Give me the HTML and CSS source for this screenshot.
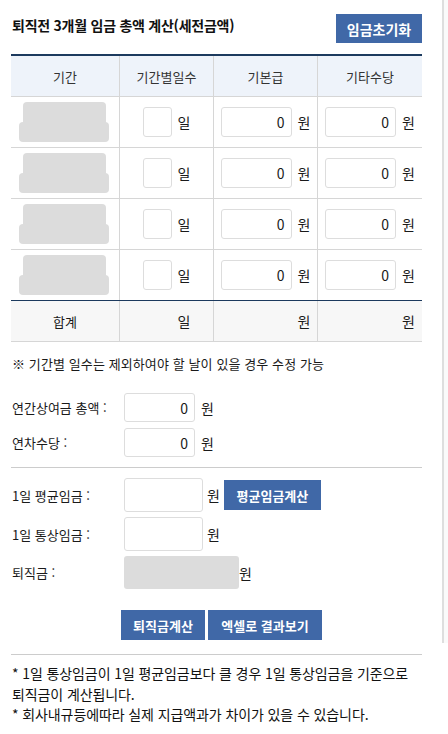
FILE: index.html
```html
<!DOCTYPE html>
<html lang="ko">
<head>
<meta charset="utf-8">
<title>퇴직금 계산</title>
<link rel="stylesheet" href="styles.css">
</head>
<body>
<div class="page">
  <div class="main">
    <div class="head">
      <h1 class="title">퇴직전 3개월 임금 총액 계산(세전금액)</h1>
      <button class="btn btn-lg" type="button">임금초기화</button>
    </div>

    <div class="wage-table">
      <div class="row row-head">
        <div class="cell">기간</div>
        <div class="cell">기간별일수</div>
        <div class="cell">기본급</div>
        <div class="cell">기타수당</div>
      </div>

      <div class="row row-body">
        <div class="cell"><div class="period"><span class="p-top"></span><span class="p-bot"></span></div></div>
        <div class="cell"><input class="inp inp-day" type="text" value=""><span class="unit">일</span></div>
        <div class="cell"><input class="inp inp-amt" type="text" value="0"><span class="unit">원</span></div>
        <div class="cell"><input class="inp inp-amt" type="text" value="0"><span class="unit">원</span></div>
      </div>
      <div class="row row-body">
        <div class="cell"><div class="period"><span class="p-top"></span><span class="p-bot"></span></div></div>
        <div class="cell"><input class="inp inp-day" type="text" value=""><span class="unit">일</span></div>
        <div class="cell"><input class="inp inp-amt" type="text" value="0"><span class="unit">원</span></div>
        <div class="cell"><input class="inp inp-amt" type="text" value="0"><span class="unit">원</span></div>
      </div>
      <div class="row row-body">
        <div class="cell"><div class="period"><span class="p-top"></span><span class="p-bot"></span></div></div>
        <div class="cell"><input class="inp inp-day" type="text" value=""><span class="unit">일</span></div>
        <div class="cell"><input class="inp inp-amt" type="text" value="0"><span class="unit">원</span></div>
        <div class="cell"><input class="inp inp-amt" type="text" value="0"><span class="unit">원</span></div>
      </div>
      <div class="row row-body row-last">
        <div class="cell"><div class="period"><span class="p-top"></span><span class="p-bot"></span></div></div>
        <div class="cell"><input class="inp inp-day" type="text" value=""><span class="unit">일</span></div>
        <div class="cell"><input class="inp inp-amt" type="text" value="0"><span class="unit">원</span></div>
        <div class="cell"><input class="inp inp-amt" type="text" value="0"><span class="unit">원</span></div>
      </div>

      <div class="row row-total">
        <div class="cell">합계</div>
        <div class="cell"><span class="blank blank-day"></span><span class="unit">일</span></div>
        <div class="cell"><span class="blank blank-amt"></span><span class="unit">원</span></div>
        <div class="cell"><span class="blank blank-amt"></span><span class="unit">원</span></div>
      </div>
    </div>

    <p class="note">※ 기간별 일수는 제외하여야 할 날이 있을 경우 수정 가능</p>

    <div class="form form-extra">
      <div class="frow">
        <span class="label">연간상여금 총액 :</span>
        <input class="inp inp-amt" type="text" value="0"><span class="unit">원</span>
      </div>
      <div class="frow">
        <span class="label">연차수당 :</span>
        <input class="inp inp-amt" type="text" value="0"><span class="unit">원</span>
      </div>
    </div>

    <div class="form form-result">
      <div class="frow">
        <span class="label">1일 평균임금 :</span>
        <input class="inp inp-wide" type="text" value=""><span class="unit unit-tight">원</span>
        <button class="btn btn-sm btn-avg" type="button">평균임금계산</button>
      </div>
      <div class="frow">
        <span class="label">1일 통상임금 :</span>
        <input class="inp inp-wide" type="text" value=""><span class="unit unit-tight">원</span>
      </div>
      <div class="frow">
        <span class="label">퇴직금 :</span>
        <span class="result-box"></span><span class="unit unit-none">원</span>
      </div>
    </div>

    <div class="actions">
      <button class="btn btn-sm btn-calc" type="button">퇴직금계산</button>
      <button class="btn btn-sm btn-excel" type="button">엑셀로 결과보기</button>
    </div>

    <div class="footnote">
      <p>* 1일 통상임금이 1일 평균임금보다 클 경우 1일 통상임금을 기준으로<br>퇴직금이 계산됩니다.</p>
      <p>* 회사내규등에따라 실제 지급액과가 차이가 있을 수 있습니다.</p>
    </div>
  </div>
  <div class="gutter"></div>
</div>
</body>
</html>
```

FILE: styles.css
```css
* { box-sizing: border-box; }

html, body {
  margin: 0;
  padding: 0;
  background: #ffffff;
}

body {
  font-family: "Noto Sans CJK KR", "Noto Sans", "Liberation Sans", sans-serif;
  color: #1a1a1a;
  font-size: 13px;
}

.page {
  display: flex;
  align-items: flex-start;
}

.main {
  width: 442px;
  padding: 14px 20px 0 11px;
}

.gutter {
  width: 6px;
  height: 643px;
  border-left: 2px solid #dedede;
  background: #fafafa;
}

/* heading */
.head {
  display: flex;
  justify-content: space-between;
  align-items: flex-start;
}

.title {
  margin: 1px 0 0 1px;
  font-size: 14px;
  line-height: 20px;
  font-weight: 700;
  letter-spacing: -0.25px;
  color: #111111;
}

.btn {
  border: 0;
  margin: 0;
  background: #4068a7;
  color: #ffffff;
  font-family: inherit;
  font-weight: 700;
  cursor: pointer;
  padding: 0;
  text-align: center;
}

.btn-lg {
  height: 29px;
  font-size: 14px;
  width: 86px;
}

.btn-sm {
  height: 30px;
  font-size: 13px;
}

.btn-avg { width: 97px; }
.btn-calc { width: 84px; }
.btn-excel { width: 114px; }

/* table */
.wage-table {
  margin-top: 11px;
  border-top: 2px solid #1c3a5e;
  width: 411px;
}

.row {
  display: grid;
  grid-template-columns: 108px 94px 104px 105px;
  border-bottom: 1px solid #d6d6d6;
}

.cell {
  display: flex;
  align-items: center;
  justify-content: center;
  border-left: 1px solid #d6d6d6;
}

.cell:first-child {
  border-left: 0;
}

.row-head {
  height: 41px;
  background: #eef3fa;
  color: #333333;
  font-size: 13px;
}

.row-body {
  height: 51px;
}

.row-last {
  border-bottom: 1px solid #1c3a5e;
}

.row-total {
  height: 41px;
  background: #f7f7f7;
  font-size: 13px;
  color: #1a1a1a;
}

.period {
  display: flex;
  flex-direction: column;
  align-items: center;
  margin-left: -2px;
}

.p-top {
  display: block;
  width: 83px;
  height: 21px;
  background: #dcdcdc;
  border-radius: 4px 4px 0 0;
}

.p-bot {
  display: block;
  width: 90px;
  height: 20px;
  background: #dcdcdc;
  border-radius: 4px;
  margin-top: -1px;
}

.inp {
  border: 1px solid #dddddd;
  border-radius: 3px;
  background: #ffffff;
  font-family: inherit;
  font-size: 14px;
  color: #1a1a1a;
  text-align: right;
  padding: 0 6px 0 0;
  margin: 0;
  outline: none;
}

.inp-day {
  width: 29px;
  height: 30px;
}

.inp-amt {
  width: 71px;
  height: 30px;
}

.blank {
  display: inline-block;
  height: 1px;
}

.blank-day { width: 29px; }
.blank-amt { width: 71px; }

.unit {
  margin-left: 6px;
  font-size: 14px;
  color: #1a1a1a;
}

/* note */
.note {
  margin: 12px 0 0 1px;
  font-size: 13px;
  line-height: 20px;
  letter-spacing: 0.1px;
  color: #1a1a1a;
}

/* forms */
.form {
  display: flex;
  flex-direction: column;
}

.form-extra {
  margin-top: 19px;
  gap: 6px;
  padding-bottom: 10px;
  border-bottom: 1px solid #cccccc;
}

.form-extra .inp-amt {
  height: 29px;
}

.frow {
  display: flex;
  align-items: center;
}

.label {
  width: 113px;
  padding-left: 1px;
  font-size: 13px;
  color: #1a1a1a;
}

.form-result {
  margin-top: 10px;
  gap: 5px;
}

.inp-wide {
  width: 79px;
  height: 34px;
}

.unit-tight {
  margin-left: 4px;
  margin-right: 4px;
}

.unit-none {
  margin-left: 0;
}

.result-box {
  display: block;
  width: 115px;
  height: 33px;
  background: #dcdcdc;
  border-radius: 3px;
}

/* actions */
.actions {
  display: flex;
  justify-content: center;
  gap: 3px;
  margin-top: 21px;
  padding-left: 10px;
  padding-bottom: 14px;
  border-bottom: 1px solid #cccccc;
}

.footnote {
  margin-top: 8px;
  padding-left: 1px;
}

.footnote p {
  margin: 0;
  font-size: 14px;
  line-height: 20.5px;
  letter-spacing: -0.1px;
  color: #111111;
}
```
